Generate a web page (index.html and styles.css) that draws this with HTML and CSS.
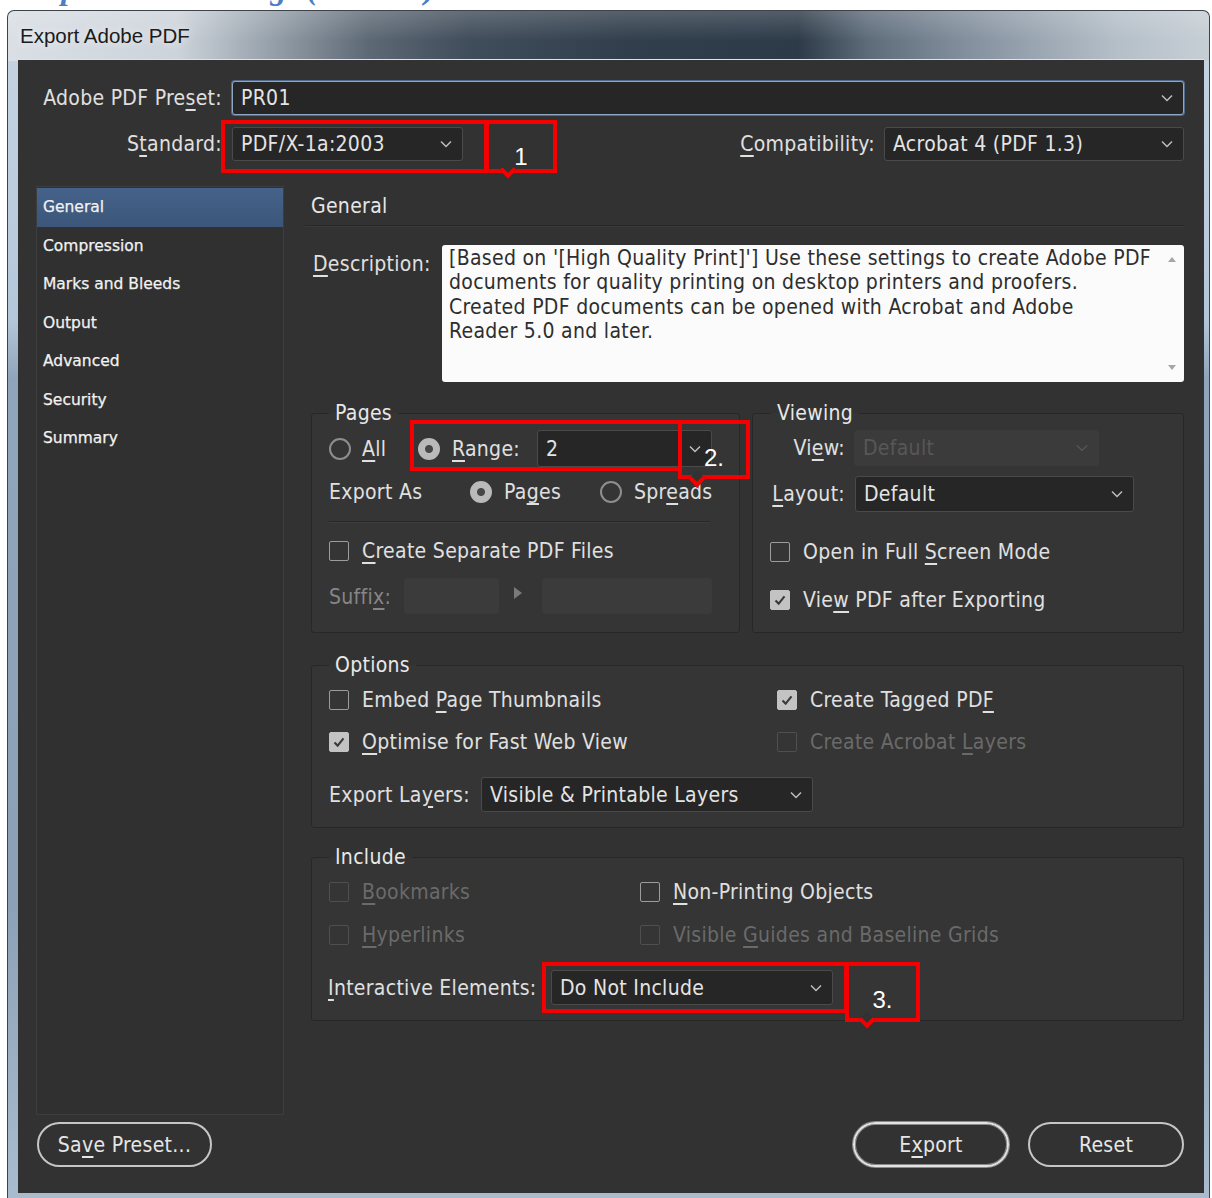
FILE: index.html
```html
<!DOCTYPE html>
<html lang="en">
<head>
<meta charset="utf-8">
<title>Export Adobe PDF</title>
<link rel="stylesheet" href="styles.css">
</head>
<body>
<div class="doc-heading"><span>Export PDF Settings (General)</span></div>

<div class="window">
  <div class="titlebar">Export Adobe PDF</div>
  <div class="client">

    <div class="hdr-row">
      <span class="hdr-label">Adobe PDF Pre<u>s</u>et:</span>
      <div class="select select-focus grow"><span class="val">PR01</span><svg class="chev" viewBox="0 0 12 8"><path d="M1 1.5l5 5 5-5"/></svg></div>
    </div>
    <div class="hdr-row hdr-row2">
      <span class="hdr-label">S<u>t</u>andard:</span>
      <div class="select w-standard"><span class="val">PDF/X-1a:2003</span><svg class="chev" viewBox="0 0 12 8"><path d="M1 1.5l5 5 5-5"/></svg></div>
      <div class="spacer"></div>
      <span class="compat-label"><u>C</u>ompatibility:</span>
      <div class="select w-compat"><span class="val">Acrobat 4 (PDF 1.3)</span><svg class="chev" viewBox="0 0 12 8"><path d="M1 1.5l5 5 5-5"/></svg></div>
    </div>

    <div class="body">
      <ul class="sidebar">
        <li class="active">General</li>
        <li>Compression</li>
        <li>Marks and Bleeds</li>
        <li>Output</li>
        <li>Advanced</li>
        <li>Security</li>
        <li>Summary</li>
      </ul>

      <div class="main">
        <div class="main-title">General</div>

        <div class="desc-row">
          <span class="desc-label"><u>D</u>escription:</span>
          <div class="desc-box">
            <div class="desc-text">
              <span>[Based on '[High Quality Print]'] Use these settings to create Adobe PDF</span>
              <span>documents for quality printing on desktop printers and proofers.</span>
              <span>Created PDF documents can be opened with Acrobat and Adobe</span>
              <span>Reader 5.0 and later.</span>
            </div>
            <div class="scroll"><i class="arr-up"></i><i class="arr-down"></i></div>
          </div>
        </div>

        <div class="group-row">
          <fieldset class="group pages">
            <legend>Pages</legend>
            <div class="row r-range">
              <div class="opt opt-all"><i class="radio"></i><span><u>A</u>ll</span></div>
              <div class="opt"><i class="radio on"></i><span class="range-label"><u>R</u>ange:</span></div>
              <div class="select w-range"><span class="val">2</span><svg class="chev" viewBox="0 0 12 8"><path d="M1 1.5l5 5 5-5"/></svg></div>
            </div>
            <div class="row r-export">
              <span class="export-as">Export As</span>
              <div class="opt opt-pages"><i class="radio on"></i><span>Pa<u>g</u>es</span></div>
              <div class="opt"><i class="radio"></i><span>Spr<u>e</u>ads</span></div>
            </div>
            <div class="sep"></div>
            <div class="row r-sep-files">
              <div class="opt opt-cb"><i class="cb"></i><span><u>C</u>reate Separate PDF Files</span></div>
            </div>
            <div class="row r-suffix">
              <span class="suffix-label dim2">Suffi<u>x</u>:</span>
              <div class="field w-suffix1"></div>
              <i class="tri"></i>
              <div class="field w-suffix2"></div>
            </div>
          </fieldset>

          <fieldset class="group viewing">
            <legend>Viewing</legend>
            <div class="row r-view">
              <span class="v-label">Vi<u>e</u>w:</span>
              <div class="select select-off w-view"><span class="val">Default</span><svg class="chev" viewBox="0 0 12 8"><path d="M1 1.5l5 5 5-5"/></svg></div>
            </div>
            <div class="row r-layout">
              <span class="v-label"><u>L</u>ayout:</span>
              <div class="select w-layout"><span class="val">Default</span><svg class="chev" viewBox="0 0 12 8"><path d="M1 1.5l5 5 5-5"/></svg></div>
            </div>
            <div class="row r-full">
              <div class="opt opt-cb"><i class="cb"></i><span>Open in Full <u>S</u>creen Mode</span></div>
            </div>
            <div class="row r-viewpdf">
              <div class="opt opt-cb"><i class="cb on"><svg viewBox="0 0 20 20"><path d="M5 10.5l3.5 3.5 6.5-8"/></svg></i><span>Vie<u>w</u> PDF after Exporting</span></div>
            </div>
          </fieldset>
        </div>

        <fieldset class="group options">
          <legend>Options</legend>
          <div class="grid2 g-options">
            <div class="opt opt-cb"><i class="cb"></i><span>Embed <u>P</u>age Thumbnails</span></div>
            <div class="opt opt-cb"><i class="cb on"><svg viewBox="0 0 20 20"><path d="M5 10.5l3.5 3.5 6.5-8"/></svg></i><span>Create Tagged PD<u>F</u></span></div>
            <div class="opt opt-cb"><i class="cb on"><svg viewBox="0 0 20 20"><path d="M5 10.5l3.5 3.5 6.5-8"/></svg></i><span><u>O</u>ptimise for Fast Web View</span></div>
            <div class="opt opt-cb off"><i class="cb"></i><span>Create Acrobat <u>L</u>ayers</span></div>
          </div>
          <div class="row r-layers">
            <span class="layers-label">Export La<u>y</u>ers:</span>
            <div class="select w-layers"><span class="val">Visible &amp; Printable Layers</span><svg class="chev" viewBox="0 0 12 8"><path d="M1 1.5l5 5 5-5"/></svg></div>
          </div>
        </fieldset>

        <fieldset class="group include">
          <legend>Include</legend>
          <div class="grid2 g-include">
            <div class="opt opt-cb off"><i class="cb"></i><span><u>B</u>ookmarks</span></div>
            <div class="opt opt-cb"><i class="cb"></i><span><u>N</u>on-Printing Objects</span></div>
            <div class="opt opt-cb off"><i class="cb"></i><span><u>H</u>yperlinks</span></div>
            <div class="opt opt-cb off"><i class="cb"></i><span>Visible <u>G</u>uides and Baseline Grids</span></div>
          </div>
          <div class="row r-interactive">
            <span class="inter-label"><u>I</u>nteractive Elements:</span>
            <div class="select w-inter"><span class="val">Do Not Include</span><svg class="chev" viewBox="0 0 12 8"><path d="M1 1.5l5 5 5-5"/></svg></div>
          </div>
        </fieldset>
      </div>
    </div>

    <div class="footer">
      <button class="btn btn-save">Sa<u>v</u>e Preset...</button>
      <div class="spacer"></div>
      <button class="btn btn-default">E<u>x</u>port</button>
      <button class="btn btn-reset">Reset</button>
    </div>
  </div>
</div>

<!-- numbered annotation callouts -->
<div class="callout c1"></div>
<div class="callout-tab c1-tab">1<i class="notch"></i></div>
<div class="callout c2"></div>
<div class="callout-tab c2-tab">2.<i class="notch"></i></div>
<div class="callout c3"></div>
<div class="callout-tab c3-tab">3.<i class="notch"></i></div>
</body>
</html>
```

FILE: styles.css
```css
* { box-sizing: border-box; }

html, body { margin: 0; }

body {
  width: 1212px;
  height: 1198px;
  overflow: hidden;
  position: relative;
  background: #ffffff;
  font-family: "DejaVu Sans Condensed", "DejaVu Sans", sans-serif;
  font-stretch: condensed;
  font-size: 21px;
  letter-spacing: 0.3px;
  color: #e0e0e0;
}

u {
  text-decoration: underline;
  text-underline-offset: 4px;
  text-decoration-thickness: 1.5px;
}

/* heading of the surrounding document, cut at the top edge */
.doc-heading {
  height: 10px;
  overflow: hidden;
  padding-left: 24px;
}
.doc-heading span {
  display: block;
  margin-top: -31px;
  font: italic bold 32px/38px "Liberation Serif", serif;
  font-stretch: normal;
  letter-spacing: 0;
  color: #4a7ec6;
  white-space: nowrap;
}

/* glass window frame */
.window {
  margin-left: 7px;
  width: 1203px;
  height: 1188px;
  border: 1px solid #3d434a;
  border-bottom: none;
  border-radius: 7px 7px 0 0;
  display: flex;
  flex-direction: column;
  background:
    linear-gradient(180deg, rgba(255,255,255,0.18), rgba(255,255,255,0) 60%) top left / 100% 50px no-repeat,
    linear-gradient(90deg, #d9dfe5 0px, #ccd3da 170px, #98a2ac 260px, #5d6975 360px, #404d5a 460px, #313e4c 620px, #2d3a48 790px, #5e6c7a 860px, #7c8997 940px, #97a3af 1020px, #b5bfc8 1110px, #c6ced5 1200px) top left / 100% 50px no-repeat,
    linear-gradient(180deg, #c6d5e3 0%, #b4c7da 26%, #8fa5bb 31%, #8ba1b7 75%, #a9bccf 100%);
}

.titlebar {
  height: 49px;
  flex: none;
  display: flex;
  align-items: center;
  padding-left: 12px;
  font-family: "Liberation Sans", sans-serif;
  font-stretch: normal;
  font-size: 20.5px;
  letter-spacing: 0;
  color: #1b1b1b;
  text-shadow: 0 0 8px rgba(255,255,255,0.8);
}

.client {
  flex: 1;
  margin: 0 5px 5px 10px;
  background: #323232;
  box-shadow: 0 -1px 0 #dce3ea;
  padding: 21px 20px 25px 18px;
  display: flex;
  flex-direction: column;
}

/* preset / standard header */
.hdr-row {
  display: flex;
  align-items: center;
  height: 34px;
  flex: none;
}
.hdr-row2 { margin-top: 12px; }
.hdr-label {
  width: 186px;
  flex: none;
  text-align: right;
  margin-right: 10px;
  white-space: nowrap;
}
.compat-label { margin-right: 9px; white-space: nowrap; }
.spacer { flex: 1; }
.grow { flex: 1; }

/* dropdowns */
.select {
  display: flex;
  align-items: center;
  height: 34px;
  flex: none;
  background: #262626;
  border: 1px solid #4a4a4a;
  border-radius: 3px;
  padding: 0 10px 0 8px;
  color: #e4e4e4;
}
.select .val {
  flex: 1;
  white-space: nowrap;
  overflow: hidden;
}
.chev {
  width: 12px;
  height: 8px;
  flex: none;
  fill: none;
  stroke: #bdbdbd;
  stroke-width: 1.5;
}
.select-focus {
  flex: 1;
  border-color: #8ea7c4;
  box-shadow: 0 0 0 1px #4e6b8e;
}
.select-off {
  background: #3b3b3b;
  border-color: #3b3b3b;
  color: #575757;
}
.select-off .chev { stroke: #555555; }

.w-standard { width: 231px; }
.w-compat { width: 300px; }
.w-range { width: 175px; height: 37px; }
.w-view { width: 245px; height: 36px; }
.w-layout { width: 279px; height: 36px; }
.w-layers { width: 332px; height: 35px; }
.w-inter { width: 282px; height: 35px; }

/* body: category list + settings */
.body {
  display: flex;
  margin-top: 25px;
  height: 929px;
  flex: none;
}

.sidebar {
  list-style: none;
  margin: 0;
  padding: 1px 0 0;
  width: 248px;
  flex: none;
  border: 1px solid #3d3d3d;
  background: #303030;
  font-family: "DejaVu Sans", sans-serif;
  font-stretch: normal;
  font-size: 15.5px;
  letter-spacing: 0;
  color: #f2f2f2;
  -webkit-text-stroke: 0.25px #f2f2f2;
}
.sidebar li {
  height: 38.5px;
  line-height: 38.5px;
  padding-left: 6px;
}
.sidebar li.active {
  background: linear-gradient(180deg, #45628a, #3b5679);
}

.main {
  flex: 1;
  margin-left: 16px;
  display: flex;
  flex-direction: column;
}

.main-title {
  height: 40px;
  line-height: 40px;
  margin-left: 5px;
  padding-left: 6px;
  border-bottom: 1px solid #272727;
  box-shadow: 0 1px 0 #3a3a3a;
  color: #e6e6e6;
}

.desc-row {
  display: flex;
  margin-top: 19px;
}
.desc-label {
  width: 142px;
  flex: none;
  padding: 7px 0 0 13px;
  line-height: 24px;
}
.desc-box {
  flex: 1;
  height: 137px;
  background: #fbfbfb;
  border-radius: 3px;
  display: flex;
  padding: 1px 0 0 7px;
  color: #2e2e2e;
  line-height: 24.4px;
}
.desc-text { flex: 1; white-space: nowrap; overflow: hidden; }
.desc-text span { display: block; }
.scroll {
  width: 24px;
  flex: none;
  display: flex;
  flex-direction: column;
  justify-content: space-between;
  align-items: center;
  padding: 11px 0 12px;
}
.arr-up, .arr-down {
  width: 0;
  height: 0;
  border-left: 4px solid transparent;
  border-right: 4px solid transparent;
}
.arr-up { border-bottom: 5px solid #a6a6a6; }
.arr-down { border-top: 5px solid #a6a6a6; }

/* group boxes */
.group-row {
  display: flex;
  gap: 12px;
  margin-top: 19px;
  padding-left: 11px;
}
.group {
  margin: 0;
  min-width: 0;
  padding: 0 17px 17px;
  border: 1px solid #272727;
  border-radius: 3px;
  background: #353535;
}
.group legend {
  padding: 0 6px;
  line-height: 24px;
  color: #e8e8e8;
}
.pages { width: 429px; flex: none; }
.viewing { flex: 1; padding: 0 18px 14px; }
.options { margin: 20px 0 0 11px; padding-bottom: 15px; }
.include { margin: 17px 0 0 11px; padding-bottom: 15px; }

.row {
  display: flex;
  align-items: center;
  height: 36px;
}

.opt {
  display: flex;
  align-items: center;
  gap: 12px;
  white-space: nowrap;
}
.opt-cb { gap: 13px; }

.radio {
  width: 22px;
  height: 22px;
  flex: none;
  border-radius: 50%;
  border: 2px solid #8e8e8e;
}
.radio.on {
  border-color: #b9b9b9;
  background: radial-gradient(circle, #474747 0 3.5px, #bababa 4.5px);
}

.cb {
  width: 20px;
  height: 20px;
  flex: none;
  border: 1.5px solid #9c9c9c;
  border-radius: 2px;
  display: flex;
}
.cb.on {
  background: #c3c3c3;
  border-color: #c3c3c3;
}
.cb svg {
  width: 100%;
  height: 100%;
  fill: none;
  stroke: #3a3a3a;
  stroke-width: 2.3;
}
.off { color: #6a6a6a; }
.off .cb { border-color: #4f4f4f; }
.dim2 { color: #868686; }

/* pages box */
.r-range { margin-top: 5px; height: 37px; }
.opt-all { width: 89px; gap: 11px; }
.range-label { width: 85px; }
.r-export { margin-top: 7px; }
.export-as { width: 141px; flex: none; }
.opt-pages { width: 130px; }
.sep {
  margin: 11px 12px 0 0;
  border-top: 1px solid #282828;
  border-bottom: 1px solid #3d3d3d;
}
.r-sep-files { margin-top: 10px; }
.r-suffix { margin-top: 9px; }
.suffix-label { width: 75px; flex: none; padding-top: 2px; }
.field {
  height: 36px;
  background: #3b3b3b;
  border-radius: 3px;
  flex: none;
}
.w-suffix1 { width: 95px; }
.w-suffix2 { width: 170px; }
.tri {
  width: 0;
  height: 0;
  margin: -6px 20px 0 15px;
  border-top: 6px solid transparent;
  border-bottom: 6px solid transparent;
  border-left: 8px solid #7a7a7a;
}

/* viewing box */
.r-view { margin-top: 5px; }
.v-label {
  width: 74px;
  flex: none;
  text-align: right;
  margin-right: 9px;
}
.r-layout { margin-top: 10px; }
.r-layout .v-label { margin-right: 10px; }
.r-full { margin-top: 22px; }
.r-viewpdf { margin-top: 12px; }
.r-full .cb, .r-viewpdf .cb { margin-left: -1px; }

/* options / include */
.grid2 {
  display: grid;
  margin-top: 5px;
}
.grid2 .opt { height: 36px; }
.g-options { grid-template-columns: 448px 1fr; row-gap: 6px; }
.g-include { grid-template-columns: 311px 1fr; row-gap: 7px; }
.r-layers { margin-top: 17px; height: 35px; }
.layers-label { width: 152px; flex: none; }
.r-interactive { margin-top: 17px; height: 35px; }
.inter-label { width: 223px; flex: none; margin-left: -1px; white-space: nowrap; }

/* dialog buttons */
.footer {
  display: flex;
  height: 45px;
  margin-top: 7px;
  flex: none;
}
.btn {
  height: 45px;
  padding: 0;
  background: transparent;
  border: 2px solid #c6c6c6;
  border-radius: 23px;
  color: #e6e6e6;
  font: inherit;
  letter-spacing: inherit;
}
.btn-save { width: 175px; margin-left: 1px; }
.btn-default {
  width: 156px;
  border-color: #e2e2e2;
  box-shadow: 0 0 0 1px #8a8a8a, inset 0 0 0 1px #8a8a8a;
}
.btn-reset { width: 156px; margin-left: 19px; }

/* numbered red callouts drawn over the dialog */
.callout, .callout-tab {
  position: absolute;
  border: 4px solid #f50000;
}
.callout-tab {
  display: flex;
  justify-content: center;
  align-items: flex-end;
  font-family: "Liberation Sans", sans-serif;
  font-stretch: normal;
  font-size: 24px;
  letter-spacing: 0;
  line-height: 1;
  color: #ffffff;
}
.notch {
  position: absolute;
  width: 12px;
  height: 12px;
  transform: rotate(45deg);
  border-right: 4px solid #f50000;
  border-bottom: 4px solid #f50000;
  background: #323232;
}
.c1 { left: 221px; top: 120px; width: 267px; height: 53px; }
.c1-tab { left: 485px; top: 120px; width: 72px; height: 53px; padding-bottom: 0; }
.c1-tab .notch { left: 13px; bottom: -6.5px; }

.c2 { left: 410px; top: 420px; width: 272px; height: 51px; }
.c2-tab { left: 678px; top: 420px; width: 72px; height: 59px; padding-bottom: 5px; }
.c2-tab .notch { left: 9px; bottom: -9.5px; }

.c3 { left: 542px; top: 962px; width: 306px; height: 51px; }
.c3-tab { left: 845px; top: 962px; width: 75px; height: 60px; padding-bottom: 6px; }
.c3-tab .notch { left: 12px; bottom: -7.5px; }
```
